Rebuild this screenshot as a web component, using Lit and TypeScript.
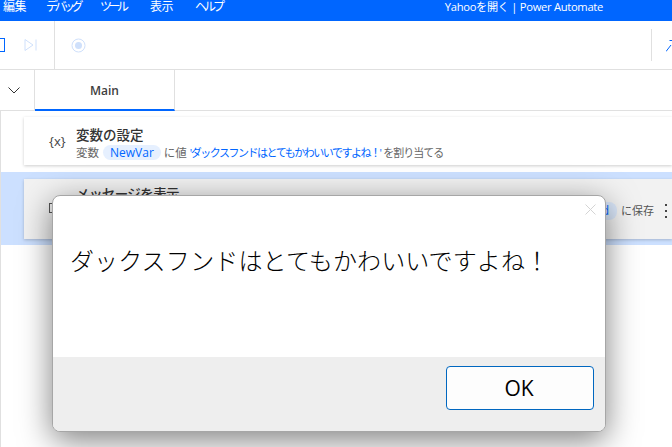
import { LitElement, html, css } from "lit";
import { customElement } from "lit/decorators.js";

@customElement("app-root")
export class AppRoot extends LitElement {
  static styles = css`
    :host { display: block; width: 672px; height: 447px; position: relative; overflow: hidden; background: #fff;
      font-family: "Open Sans", "Noto Sans CJK JP", sans-serif; color: #333; }
    .titlebar { height: 21px; background: #0066ff; color: #fff; display: flex; justify-content: space-between; font-size: 12px; line-height: 13px; overflow: hidden; }
    .menu { display: flex; padding-left: 3px; }
    .menu span { white-space: nowrap; }
    .m1 { width: 43px; letter-spacing: -.5px; }
    .m2 { width: 54px; letter-spacing: -3.5px; }
    .m3 { width: 50px; letter-spacing: -3.5px; }
    .m4 { width: 45px; letter-spacing: -.5px; }
    .m5 { width: 30px; letter-spacing: -3px; }
    .wintitle { margin-right: 69px; font-size: 11.2px; letter-spacing: -.3px; white-space: nowrap; line-height: 13px; }
    .toolbar { height: 48px; border-bottom: 1px solid #e0e0e0; display: flex; align-items: center; box-sizing: content-box; }
    .tb-left { height: 48px; border-right: 1px solid #e0e0e0; display: flex; align-items: center; box-sizing: border-box; width: 55px; }
    .sq { width: 5px; height: 14px; border: 1px solid #0066ff; border-left: none; box-sizing: border-box; }
    .next { margin-left: 19px; }
    .rec { margin-left: 16px; }
    .tb-right { margin-left: auto; display: flex; align-items: center; height: 32px; border-left: 1px solid #e0e0e0; width: 21px; padding-left: 14px; box-sizing: border-box; }
    .tabs { height: 40px; border-bottom: 1px solid #e0e0e0; display: flex; }
    .chev { width: 35px; border-right: 1px solid #e0e0e0; box-sizing: border-box; display: flex; align-items: center; padding-left: 8px; }
    .tab { width: 140px; border-right: 1px solid #e0e0e0; border-bottom: 2px solid #0066ff; margin-bottom: -1px; padding-top: 1px; display: flex; align-items: center; justify-content: center; font-size: 12px; font-weight: 600; color: #404040; box-sizing: border-box; }
    .canvas { height: 336px; border-left: 1px solid #e0e0e0; padding-top: 6px; box-sizing: border-box; }
    .card { margin-left: 23px; height: 48px; background: #fff; box-shadow: 0 1px 3px rgba(0,0,0,.2); display: flex; align-items: center; }
    .ic { width: 52px; flex: none; font-size: 13px; color: #444; white-space: nowrap; box-sizing: border-box; padding-left: 25px; font-weight: 400; }
    .body { padding-top: 4px; }
    .name { font-size: 13.5px; line-height: 18px; font-weight: 500; color: #333; white-space: nowrap; }
    .desc { font-size: 11.5px; line-height: 17px; color: #666; white-space: nowrap; display: flex; align-items: center; }
    .pill { background: #e6f0ff; color: #0066ff; border-radius: 8px; padding: 0 7px; margin: 0 3px 0 4px; font-size: 12px; line-height: 15px; }
    .str { color: #0066ff; margin: 0 3px 0 3px; font-size: 11px; letter-spacing: -1.5px; }
    .as { font-size: 11px; letter-spacing: -1px; }
    .sel { margin-top: 7px; height: 73px; background: #cce0ff; padding-top: 7px; box-sizing: border-box; }
    .card2 { height: 60px; background: #f2f2f2; align-items: flex-start; }
    .box { display: block; margin-top: 24px; width: 12px; height: 10px; border: 1.5px solid #555; box-sizing: border-box; }
    .ic2 { padding-left: 25px; width: 52px; flex: none; box-sizing: border-box; }
    .name2 { margin-top: 6px; letter-spacing: -.6px; }
    .save { margin-left: auto; margin-top: 23px; display: flex; align-items: center; font-size: 11px; line-height: 18px; color: #555; white-space: nowrap; }
    .pill2 { background: #dbe8fb; color: #0066ff; border-radius: 8px; padding: 0 8px; margin-right: 4px; font-size: 12px; }
    .keb { margin-left: 6px; display: block; }
    .overlay { position: absolute; left: 52px; top: 195px; width: 554px; height: 237px; background: #fff; border-radius: 8px; border: 1px solid #a6a6a6; box-sizing: border-box; box-shadow: 0 8px 32px rgba(0,0,0,.5); display: flex; flex-direction: column; overflow: hidden; }
    .x { position: absolute; right: 9px; top: 8px; }
    .msg { flex: 1; padding: 48px 0 0 17px; font-size: 24px; line-height: 32px; color: #000; white-space: nowrap; letter-spacing: .1px; font-weight: 300; font-family: "Noto Sans CJK JP", sans-serif; }
    .foot { height: 74px; background: #eeeeee; display: flex; justify-content: flex-end; padding: 9px 11px 0 0; box-sizing: border-box; }
    .ok { width: 148px; height: 44px; padding-right: 2px; background: #fdfdfd; border: 1px solid #0067c0; border-radius: 4px; box-sizing: border-box; display: flex; align-items: center; justify-content: center; font-size: 21px; color: #000; font-family: "Open Sans", sans-serif; }
  `;
  render() {
    return html`
      <div class="titlebar">
        <div class="menu"><span class="m1">編集</span><span class="m2">デバッグ</span><span class="m3">ツール</span><span class="m4">表示</span><span class="m5">ヘルプ</span></div>
        <div class="wintitle">Yahooを開く | Power Automate</div>
      </div>
      <div class="toolbar">
        <div class="tb-left">
          <div class="sq"></div>
          <svg class="next" width="13" height="12" viewBox="0 0 13 12" fill="none" stroke="#cfe0fb" stroke-width="1"><path d="M1 .5v11L9 6zM12 .5v11"/></svg>
        </div>
        <svg class="rec" width="15" height="15" viewBox="0 0 15 15" fill="none"><circle cx="7.5" cy="7.5" r="6.5" stroke="#cfe0fb"/><circle cx="7.5" cy="7.5" r="3.5" fill="#cfe0fb"/></svg>
        <div class="tb-right"><svg width="6" height="14" viewBox="0 0 6 14" fill="none" stroke="#0066ff" stroke-width="1"><path d="M0 13.5L5 7M3.5 2.5H6"/></svg></div>
      </div>
      <div class="tabs">
        <div class="chev"><svg width="12" height="7" viewBox="0 0 12 7" fill="none" stroke="#333"><path d="M.5.5L6 6 11.5.5"/></svg></div>
        <div class="tab">Main</div>
      </div>
      <div class="canvas">
        <div class="card">
          <div class="ic">{x}</div>
          <div class="body">
            <div class="name">変数の設定</div>
            <div class="desc">変数<span class="pill">NewVar</span>に値<span class="str">'ダックスフンドはとてもかわいいですよね！'</span><span class="as">を割り当てる</span></div>
          </div>
        </div>
        <div class="sel">
          <div class="card card2">
            <div class="ic2"><div class="box"></div></div>
            <div class="name name2">メッセージを表示</div>
            <div class="save"><span class="pill2">ButtonPressed</span>に保存<svg class="keb" width="12" height="16" viewBox="0 0 12 16" fill="#444"><rect x="5" y="1" width="2" height="2"/><rect x="5" y="7" width="2" height="2"/><rect x="5" y="13" width="2" height="2"/></svg></div>
          </div>
        </div>
      </div>
      <div class="overlay">
        <svg class="x" width="11" height="11" viewBox="0 0 11 11" stroke="#d4d4d4" fill="none"><path d="M.5.5l10 10M10.5.5l-10 10"/></svg>
        <div class="msg">ダックスフンドはとてもかわいいですよね！</div>
        <div class="foot"><div class="ok">OK</div></div>
      </div>
    `;
  }
}
